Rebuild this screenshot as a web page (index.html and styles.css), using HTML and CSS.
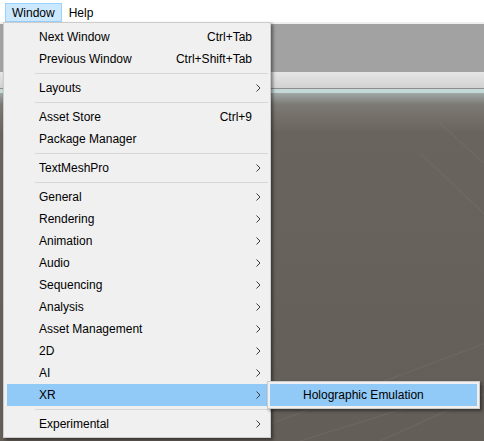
FILE: index.html
```html
<!DOCTYPE html>
<html>
<head>
<meta charset="utf-8">
<link rel="stylesheet" href="styles.css">
</head>
<body>
<div class="app">
  <div class="menubar">
    <span class="mb-item active">Window</span>
    <span class="mb-item">Help</span>
  </div>
  <div class="editor">
    <div class="ed-line"></div>
    <div class="ed-toolbar"></div>
    <div class="ed-tabs"></div>
    <div class="ed-tabline"></div>
    <div class="ed-teal"></div>
    <div class="scene">
      <svg class="grid" viewBox="0 0 484 347" preserveAspectRatio="none">
        <g stroke="#8a857f" stroke-width="1" fill="none" opacity="0.25">
          <line x1="300" y1="347" x2="484" y2="290"/>
          <line x1="270" y1="330" x2="484" y2="250"/>
          <line x1="420" y1="60" x2="484" y2="120"/>
          <line x1="440" y1="30" x2="484" y2="70"/>
          <line x1="380" y1="347" x2="484" y2="300"/>
        </g>
      </svg>
    </div>
  </div>

  <div class="menu">
    <div class="item"><span class="label">Next Window</span><span class="shortcut">Ctrl+Tab</span></div>
    <div class="item"><span class="label">Previous Window</span><span class="shortcut">Ctrl+Shift+Tab</span></div>
    <div class="sep"></div>
    <div class="item"><span class="label">Layouts</span><svg class="arrow" viewBox="0 0 5 8"><polyline points="0.5,0.5 4,4 0.5,7.5"/></svg></div>
    <div class="sep"></div>
    <div class="item"><span class="label">Asset Store</span><span class="shortcut">Ctrl+9</span></div>
    <div class="item"><span class="label">Package Manager</span></div>
    <div class="sep"></div>
    <div class="item"><span class="label">TextMeshPro</span><svg class="arrow" viewBox="0 0 5 8"><polyline points="0.5,0.5 4,4 0.5,7.5"/></svg></div>
    <div class="sep"></div>
    <div class="item"><span class="label">General</span><svg class="arrow" viewBox="0 0 5 8"><polyline points="0.5,0.5 4,4 0.5,7.5"/></svg></div>
    <div class="item"><span class="label">Rendering</span><svg class="arrow" viewBox="0 0 5 8"><polyline points="0.5,0.5 4,4 0.5,7.5"/></svg></div>
    <div class="item"><span class="label">Animation</span><svg class="arrow" viewBox="0 0 5 8"><polyline points="0.5,0.5 4,4 0.5,7.5"/></svg></div>
    <div class="item"><span class="label">Audio</span><svg class="arrow" viewBox="0 0 5 8"><polyline points="0.5,0.5 4,4 0.5,7.5"/></svg></div>
    <div class="item"><span class="label">Sequencing</span><svg class="arrow" viewBox="0 0 5 8"><polyline points="0.5,0.5 4,4 0.5,7.5"/></svg></div>
    <div class="item"><span class="label">Analysis</span><svg class="arrow" viewBox="0 0 5 8"><polyline points="0.5,0.5 4,4 0.5,7.5"/></svg></div>
    <div class="item"><span class="label">Asset Management</span><svg class="arrow" viewBox="0 0 5 8"><polyline points="0.5,0.5 4,4 0.5,7.5"/></svg></div>
    <div class="item"><span class="label">2D</span><svg class="arrow" viewBox="0 0 5 8"><polyline points="0.5,0.5 4,4 0.5,7.5"/></svg></div>
    <div class="item"><span class="label">AI</span><svg class="arrow" viewBox="0 0 5 8"><polyline points="0.5,0.5 4,4 0.5,7.5"/></svg></div>
    <div class="item hl"><span class="label">XR</span><svg class="arrow" viewBox="0 0 5 8"><polyline points="0.5,0.5 4,4 0.5,7.5"/></svg></div>
    <div class="sep"></div>
    <div class="item"><span class="label">Experimental</span><svg class="arrow" viewBox="0 0 5 8"><polyline points="0.5,0.5 4,4 0.5,7.5"/></svg></div>
  </div>

  <div class="submenu">
    <div class="item hl sub"><span class="label">Holographic Emulation</span></div>
  </div>
</div>
</body>
</html>
```

FILE: styles.css
```css
html, body {
  margin: 0;
  padding: 0;
}
body {
  width: 484px;
  height: 441px;
  overflow: hidden;
  font-family: "Liberation Sans", Arial, sans-serif;
  font-size: 12px;
  color: #000;
}
.app {
  position: relative;
  width: 484px;
  height: 441px;
  display: flex;
  flex-direction: column;
}
.menubar {
  height: 22px;
  background: #ffffff;
  display: flex;
  align-items: flex-start;
  padding: 3px 0 0 5px;
  box-sizing: border-box;
}
.mb-item {
  display: block;
  height: 19px;
  line-height: 17px;
  padding: 1px 6px 0 6px;
  border: 1px solid transparent;
  box-sizing: border-box;
}
.mb-item.active {
  background: #cce8ff;
  border-color: #99d1ff;
}
.editor {
  flex: 1;
  display: flex;
  flex-direction: column;
}
.ed-line {
  height: 2px;
  background: #f0f0f0;
}
.ed-toolbar {
  height: 48px;
  background: #a2a2a2;
}
.ed-tabs {
  height: 16px;
  background: linear-gradient(#e6e6e6, #d2d2d2);
}
.ed-tabline {
  height: 1px;
  background: #8e8e8e;
}
.ed-teal {
  height: 4px;
  background: #c4d9d8;
}
.scene {
  flex: 1;
  background: linear-gradient(#9fa9a6 0px, #7c7873 12px, #6a645e 40px, #645e58 100%);
  display: flex;
}
.grid {
  width: 100%;
  height: 100%;
  display: block;
}

/* dropdown menu */
.menu {
  position: absolute;
  left: 3px;
  top: 22px;
  width: 268px;
  box-sizing: border-box;
  background: #f0f0f0;
  border: 1px solid #cccccc;
  padding: 3px 2px 2px 3px;
  box-shadow: 2px 2px 3px rgba(0, 0, 0, 0.45);
}
.item {
  height: 22px;
  line-height: 22px;
  display: flex;
  align-items: center;
  padding-left: 32px;
  white-space: nowrap;
}
.item .label {
  flex: 1;
}
.item .shortcut {
  margin-right: 16px;
}
.item .arrow {
  width: 5px;
  height: 8px;
  margin-right: 7px;
  fill: none;
  stroke: #3c3c3c;
  stroke-width: 1;
}
.item.hl {
  background: #91c9f7;
}
.sep {
  height: 1px;
  margin: 3px 0 3px 28px;
  background: #d7d7d7;
}

/* submenu */
.submenu {
  position: absolute;
  left: 267px;
  top: 381px;
  width: 213px;
  box-sizing: border-box;
  background: #f0f0f0;
  border: 1px solid #cccccc;
  padding: 2px;
  box-shadow: 2px 2px 3px rgba(0, 0, 0, 0.45);
}
.item.sub {
  padding-left: 33px;
}
```
